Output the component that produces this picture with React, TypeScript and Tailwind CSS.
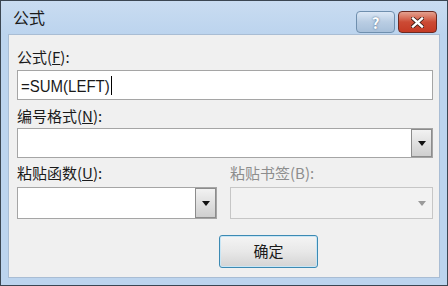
const font = { fontFamily: '"Noto Sans CJK SC", "Liberation Sans", sans-serif' };

function Arrow({ disabled }: { disabled?: boolean }) {
  return (
    <svg width="8" height="5" viewBox="0 0 8 5">
      <path d="M0 0 H8 L4 5 Z" fill={disabled ? '#9a9a9a' : '#111'} />
    </svg>
  );
}

function Combo({ className, disabled }: { className: string; disabled?: boolean }) {
  return (
    <div
      className={
        'flex border ' +
        (disabled ? 'border-[#c6c6c6] bg-[#f2f2f2] ' : 'border-[#a5a5a5] bg-white ') +
        className
      }
    >
      <div className="flex-1" />
      <div
        className={
          'w-[21px] flex items-center justify-center border ' +
          (disabled
            ? 'border-transparent bg-[#f2f2f2]'
            : 'border-[#8c8c8c] bg-gradient-to-b from-[#f2f2f2] to-[#cfcfcf]')
        }
      >
        <Arrow disabled={disabled} />
      </div>
    </div>
  );
}

export default function App() {
  return (
    <div
      className="w-[448px] h-[286px] flex flex-col border border-[#3b4652] bg-[#bcd4ee] text-[#1a1a1a]"
      style={font}
    >
      {/* title bar */}
      <div className="h-[33px] flex items-start bg-gradient-to-b from-[#c9dcf1] to-[#bcd4ee]">
        <div className="pl-[12px] pt-[6px] text-[16px] leading-[20px]">公式</div>
        <div className="flex-1" />
        <div className="flex gap-[3px] pt-[10px] pr-[10px]">
          <div className="w-[39px] h-[22px] rounded-[4px] border border-[#6f8fae] bg-gradient-to-b from-[#dbe7f5] via-[#b9cde3] to-[#a8c0da] flex items-center justify-center text-white font-bold text-[15px] leading-none [text-shadow:0_0_2px_#3d5a7a]">
            ?
          </div>
          <div className="w-[39px] h-[22px] rounded-[4px] border border-[#6b2a22] bg-gradient-to-b from-[#e3a08f] via-[#cc4a34] to-[#c53a24] flex items-center justify-center">
            <svg width="13" height="11" viewBox="0 0 13 11">
              <path d="M2 1.5 L11 9.5 M11 1.5 L2 9.5" stroke="#3b1a14" strokeWidth="4" strokeLinecap="square" />
              <path d="M2 1.5 L11 9.5 M11 1.5 L2 9.5" stroke="#fff" strokeWidth="2.4" strokeLinecap="square" />
            </svg>
          </div>
        </div>
      </div>

      {/* client area */}
      <div className="flex-1 mx-[7px] mb-[7px] border border-[#a9bdd4] bg-[#f0f0f0] pl-[8px] pr-[6px] text-[15px]">
        <div className="mt-[12px] leading-[20px]">
          公式(<span className="underline">F</span>):
        </div>
        <div className="mt-[3px] h-[30px] border border-[#a5a5a5] bg-white flex items-center pl-[3px]">
          <span className="text-[15px] leading-none scale-y-[1.15]" style={{ fontFamily: '"Liberation Sans", sans-serif' }}>
            =SUM(LEFT)
          </span>
          <span className="ml-[1px] w-[1px] h-[19px] bg-black" />
        </div>
        <div className="mt-[6px] leading-[20px]">
          编号格式(<span className="underline">N</span>):
        </div>
        <div className="mt-[2px] flex">
          <Combo className="flex-1 h-[30px]" />
        </div>
        <div className="mt-[5px] flex leading-[20px]">
          <div className="w-[213px]">
            粘贴函数(<span className="underline">U</span>):
          </div>
          <div className="text-[#8d8d8d]">粘贴书签(B):</div>
        </div>
        <div className="mt-[4px] flex">
          <Combo className="w-[200px] h-[32px]" />
          <div className="w-[13px]" />
          <Combo className="flex-1 h-[32px]" disabled />
        </div>
        <div className="mt-[16px] flex pl-[202px]">
          <div className="w-[99px] h-[33px] rounded-[3px] border border-[#3c8ab3] bg-gradient-to-b from-[#f4f4f4] via-[#e8e8e8] to-[#d4d4d4] shadow-[inset_0_0_0_1px_#c9e6f5] flex items-center justify-center">
            确定
          </div>
        </div>
      </div>
    </div>
  );
}
